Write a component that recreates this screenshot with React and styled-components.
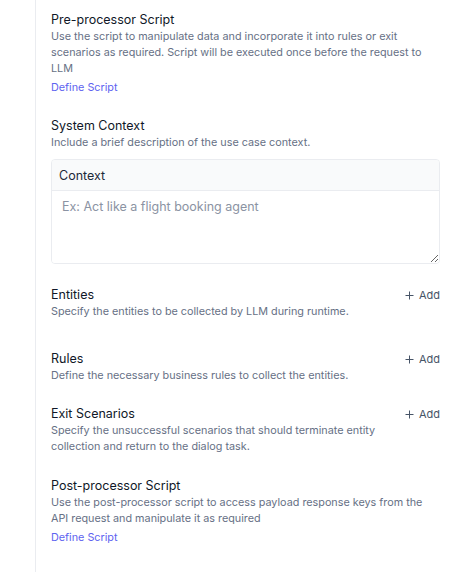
import React from "react";
import styled, { createGlobalStyle } from "styled-components";

const Global = createGlobalStyle`
  html, body { margin: 0; padding: 0; background: #ffffff; }
  body { font-family: Inter, "Noto Sans", sans-serif; }
  * { box-sizing: border-box; }
`;

const Panel = styled.div`
  margin-left: 35px;
  min-height: 572px;
  border-left: 1px solid #eaecf0;
  padding: 11px 12px 0 15px;
  display: flex;
  flex-direction: column;
`;

const Section = styled.section`
  display: flex;
  flex-direction: column;
  margin-top: ${(p) => p.$top || 0}px;
`;

const HeaderRow = styled.div`
  display: flex;
  align-items: center;
  justify-content: space-between;
`;

const Title = styled.h3`
  margin: 0;
  font-size: 12.5px;
  line-height: 18px;
  font-weight: 400;
  color: #101828;
`;

const Desc = styled.p`
  margin: 0;
  font-size: 10.8px;
  line-height: 16px;
  color: #667085;
  padding-right: ${(p) => p.$pr || 0}px;
`;

const Link = styled.a`
  margin-top: 3px;
  font-size: 10.8px;
  line-height: 16px;
  color: #5e63f0;
  cursor: pointer;
  align-self: flex-start;
`;

const AddButton = styled.button`
  display: flex;
  align-items: center;
  gap: 5px;
  border: 0;
  background: transparent;
  padding: 0;
  font-family: inherit;
  font-size: 11px;
  line-height: 18px;
  color: #475467;
  cursor: pointer;
`;

const Box = styled.div`
  margin-top: 8px;
  border: 1px solid #eaecf0;
  border-radius: 4px;
  overflow: hidden;
  display: flex;
  flex-direction: column;
`;

const BoxHeader = styled.div`
  height: 31px;
  display: flex;
  align-items: center;
  padding: 0 7px;
  background: #f9fafb;
  border-bottom: 1px solid #eaecf0;
  font-size: 12.5px;
  color: #1d2939;
`;

const Area = styled.textarea`
  display: block;
  width: 100%;
  height: 72px;
  border: 0;
  outline: none;
  resize: vertical;
  padding: 8px 10px;
  font-family: inherit;
  font-size: 12.5px;
  line-height: 16px;
  color: #344054;
  background: #ffffff;
  &::placeholder { color: #8b93a3; }
`;

const PlusIcon = () => (
  <svg width="9" height="9" viewBox="0 0 9 9" fill="none" stroke="#475467" strokeWidth="1">
    <path d="M4.5 0.5v8M0.5 4.5h8" />
  </svg>
);

const Add = () => (
  <AddButton type="button">
    <PlusIcon />
    Add
  </AddButton>
);

export default function App() {
  return (
    <>
      <Global />
      <Panel>
        <Section>
          <Title>Pre-processor Script</Title>
          <Desc>
            Use the script to manipulate data and incorporate it into rules or exit scenarios as
            required. Script will be executed once before the request to LLM
          </Desc>
          <Link>Define Script</Link>
        </Section>

        <Section $top={21}>
          <Title>System Context</Title>
          <Desc>Include a brief description of the use case context.</Desc>
          <Box>
            <BoxHeader>Context</BoxHeader>
            <Area placeholder="Ex: Act like a flight booking agent" />
          </Box>
        </Section>

        <Section $top={22}>
          <HeaderRow>
            <Title>Entities</Title>
            <Add />
          </HeaderRow>
          <Desc>Specify the entities to be collected by LLM during runtime.</Desc>
        </Section>

        <Section $top={30}>
          <HeaderRow>
            <Title>Rules</Title>
            <Add />
          </HeaderRow>
          <Desc>Define the necessary business rules to collect the entities.</Desc>
        </Section>

        <Section $top={21}>
          <HeaderRow>
            <Title>Exit Scenarios</Title>
            <Add />
          </HeaderRow>
          <Desc $pr={50}>
            Specify the unsuccessful scenarios that should terminate entity collection and return
            to the dialog task.
          </Desc>
        </Section>

        <Section $top={22}>
          <Title>Post-processor Script</Title>
          <Desc>
            Use the post-processor script to access payload response keys from the API request and
            manipulate it as required
          </Desc>
          <Link>Define Script</Link>
        </Section>
      </Panel>
    </>
  );
}
